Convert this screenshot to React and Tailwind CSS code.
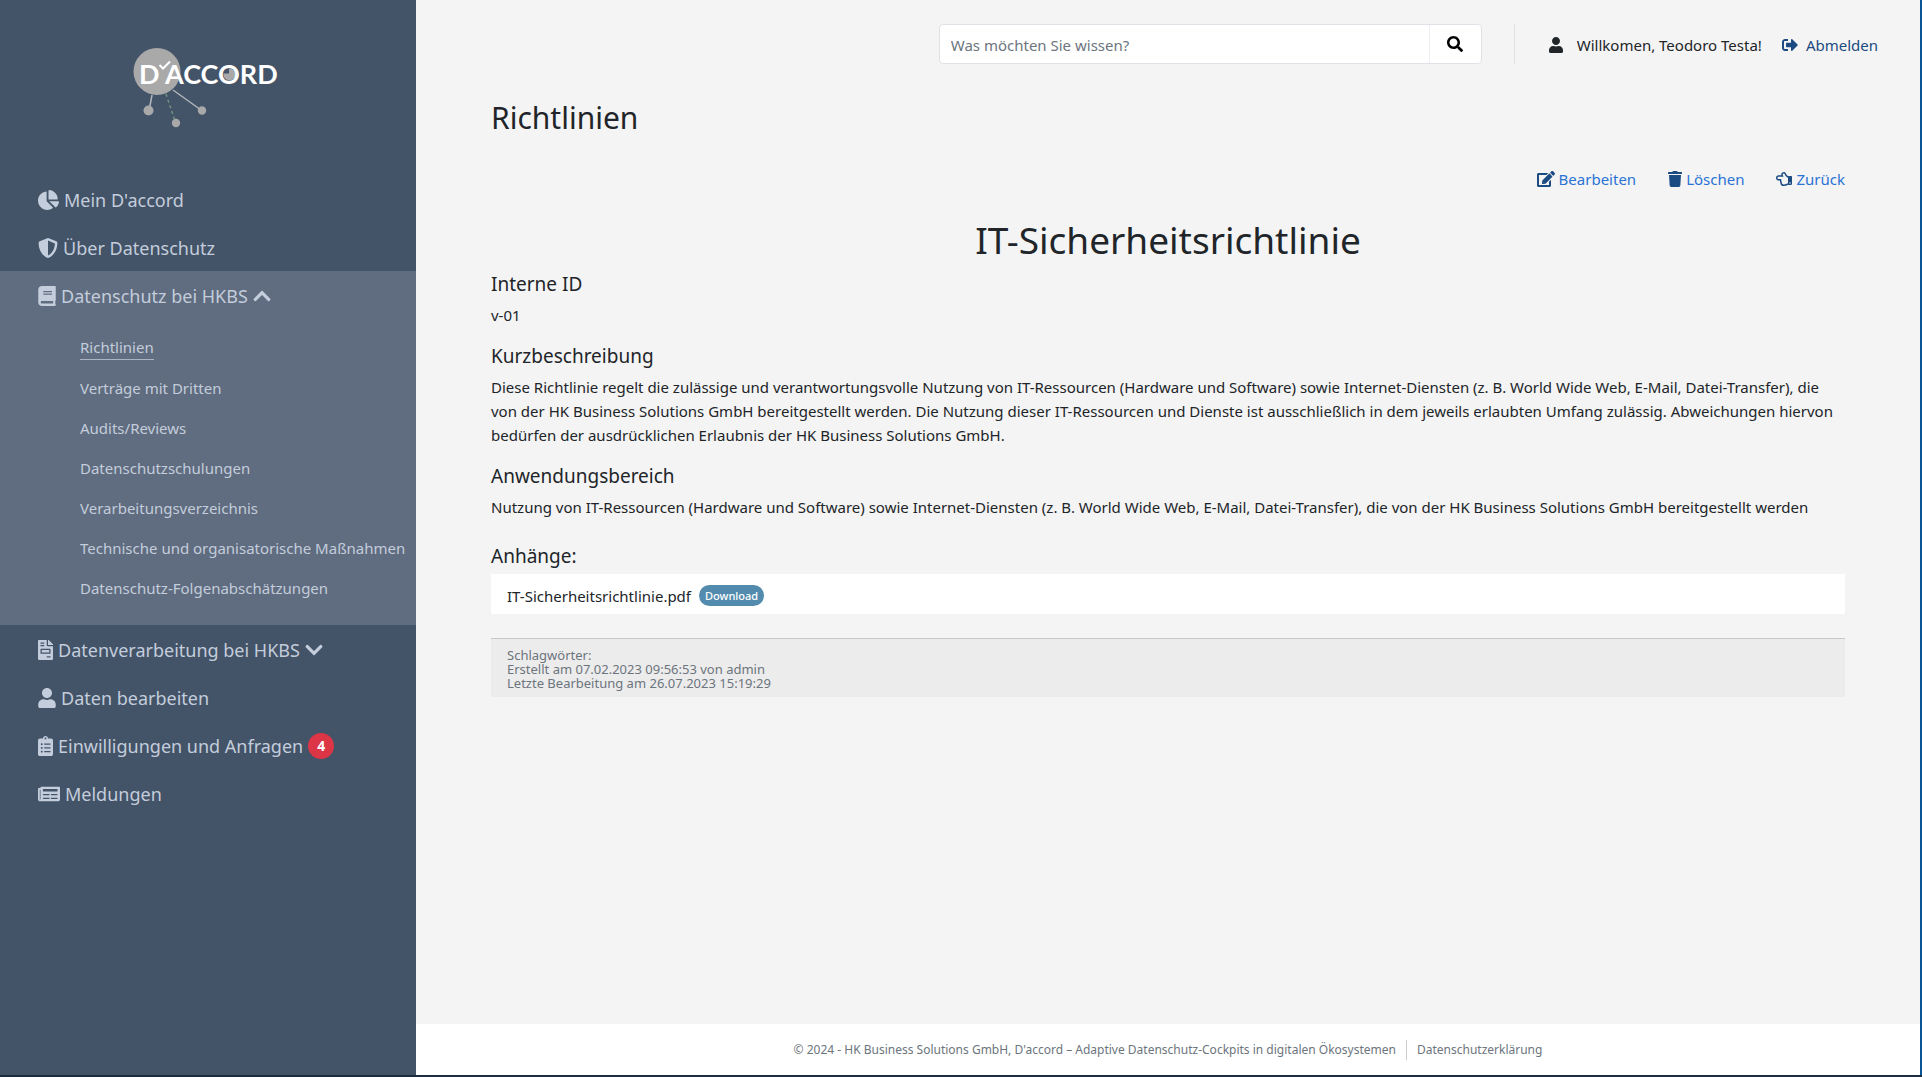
import React from "react";
import {
  FaChartPie,
  FaShieldAlt,
  FaBook,
  FaFileInvoice,
  FaUser,
  FaClipboardList,
  FaNewspaper,
  FaChevronUp,
  FaChevronDown,
  FaSearch,
  FaSignOutAlt,
  FaEdit,
  FaTrash,
  FaRegHandPointLeft,
} from "react-icons/fa";

const subItems = [
  "Richtlinien",
  "Verträge mit Dritten",
  "Audits/Reviews",
  "Datenschutzschulungen",
  "Verarbeitungsverzeichnis",
  "Technische und organisatorische Maßnahmen",
  "Datenschutz-Folgenabschätzungen",
];

function Logo() {
  return (
    <svg viewBox="0 0 150 84" className="h-[84px] w-[150px]" role="img" aria-label="D'accord">
      <g stroke="#b0b5ba" strokeWidth="1.5">
        <path d="M22 48 19 64" />
        <path d="M43 43 71 63" />
      </g>
      <path d="M36 47 45 74" stroke="#6f9480" strokeWidth="1.5" strokeDasharray="3 3" />
      <g fill="#a9a9a9">
        <circle cx="27" cy="24.500" r="23.500" />
        <circle cx="18.500" cy="63.500" r="5" />
        <circle cx="46" cy="76" r="4.200" />
        <circle cx="72" cy="63.500" r="4.200" />
        <circle cx="99.500" cy="27.500" r="6" />
      </g>
      <path d="M99 26.500V20H92V26.500Z" fill="#435368" />
      <g fill="#ffffff" fontFamily="Lato, sans-serif" fontWeight="700" fontSize="27">
        <text x="9" y="37">D</text>
        <text x="35" y="37">ACCORD</text>
      </g>
      <path d="M29.500 18 33 21.500 40 14.500" fill="none" stroke="#ffffff" strokeWidth="2" />
    </svg>
  );
}

function NavLink({ icon: Icon, iconWidth, children }) {
  return (
    <a href="#" className="flex h-12 items-center gap-[5px] pt-0.5 pl-[38px] text-[18px] whitespace-nowrap">
      <Icon className={`h-5 shrink-0 ${iconWidth}`} />
      {children}
    </a>
  );
}

function Sidebar() {
  return (
    <aside className="flex w-[416px] shrink-0 flex-col bg-[#435368] text-[#c3cddb]">
      <a href="#" className="mt-[47px] mb-11 ml-[130px] block">
        <Logo />
      </a>
      <nav>
        <NavLink icon={FaChartPie} iconWidth="w-[21px]">Mein D'accord</NavLink>
        <NavLink icon={FaShieldAlt} iconWidth="w-5">Über Datenschutz</NavLink>
        <div className="bg-[#606c7f] pb-[17px]">
          <NavLink icon={FaBook} iconWidth="w-[18px]">
            Datenschutz bei HKBS
            <FaChevronUp className="h-5 w-[18px]" />
          </NavLink>
          <ul className="mt-[9px] pl-20">
            {subItems.map((label, i) => (
              <li key={label} className="flex h-10 items-center text-[15px] whitespace-nowrap">
                <a href="#" className={i === 0 ? "border-b border-[#a9b4c4]" : ""}>
                  {label}
                </a>
              </li>
            ))}
          </ul>
        </div>
        <NavLink icon={FaFileInvoice} iconWidth="w-[15px]">
          Datenverarbeitung bei HKBS
          <FaChevronDown className="h-5 w-[18px]" />
        </NavLink>
        <NavLink icon={FaUser} iconWidth="w-[18px]">Daten bearbeiten</NavLink>
        <NavLink icon={FaClipboardList} iconWidth="w-[15px]">
          Einwilligungen und Anfragen
          <span className="flex h-[26px] w-[26px] items-center justify-center rounded-full bg-[#dc3545] text-sm font-bold text-white">
            4
          </span>
        </NavLink>
        <NavLink icon={FaNewspaper} iconWidth="w-[22px]">Meldungen</NavLink>
      </nav>
    </aside>
  );
}

function Header() {
  return (
    <header className="flex h-16 items-end justify-end pr-[42px] text-[15px]">
      <form className="flex h-10 w-[543px] rounded border border-[#dee2e6] bg-white" onSubmit={(e) => e.preventDefault()}>
        <input
          type="search"
          aria-label="Suche"
          placeholder="Was möchten Sie wissen?"
          className="min-w-0 flex-1 px-[11px] pt-0.5 outline-none placeholder:text-[#6c757d]"
        />
        <button type="submit" aria-label="Suchen" className="flex w-[52px] items-center justify-center border-l border-[#eceef0] text-black">
          <FaSearch className="h-4 w-4" />
        </button>
      </form>
      <div className="ml-8 flex h-10 items-center border-l border-[#dee2e6] pt-0.5 pl-[34px]">
        <FaUser className="h-4 w-[14px]" />
        <span className="ml-3.5">Willkomen, Teodoro Testa!</span>
        <a href="#" className="ml-5 flex items-center gap-2 text-[#1b4b82]">
          <FaSignOutAlt className="h-4 w-4" />
          Abmelden
        </a>
      </div>
    </header>
  );
}

function Action({ icon: Icon, iconWidth, children }) {
  return (
    <a href="#" className="flex items-center gap-1 text-[#2a72d4]">
      <Icon className={`h-4 text-[#1b4b82] ${iconWidth}`} />
      {children}
    </a>
  );
}

function Section({ title, children }) {
  return (
    <section className="mb-[17px]">
      <h3 className="mb-[7px] text-[19px] leading-6">{title}</h3>
      <p>{children}</p>
    </section>
  );
}

export default function App() {
  return (
    <div className="flex min-h-screen border-b-2 border-[#1b2d3e] bg-[#f4f4f4] font-['Noto_Sans',sans-serif] text-[#212529]">
      <Sidebar />
      <div className="flex min-w-0 flex-1 flex-col border-r-2 border-[#0a5596]">
        <Header />
        <main className="flex-1 px-[75px] text-[15px] leading-6">
          <h2 className="mt-[34px] text-[30px] leading-10">Richtlinien</h2>
          <div className="mt-[29px] flex justify-end gap-8">
            <Action icon={FaEdit} iconWidth="w-[18px]">Bearbeiten</Action>
            <Action icon={FaTrash} iconWidth="w-[14px]">Löschen</Action>
            <Action icon={FaRegHandPointLeft} iconWidth="w-4">Zurück</Action>
          </div>
          <h1 className="mt-[25px] mb-2 text-center text-[37px] leading-12">IT-Sicherheitsrichtlinie</h1>
          <Section title="Interne ID">v-01</Section>
          <Section title="Kurzbeschreibung">
            Diese Richtlinie regelt die zulässige und verantwortungsvolle Nutzung von IT-Ressourcen (Hardware und
            Software) sowie Internet-Diensten (z. B. World Wide Web, E-Mail, Datei-Transfer), die von der HK Business
            Solutions GmbH bereitgestellt werden. Die Nutzung dieser IT-Ressourcen und Dienste ist ausschließlich in dem
            jeweils erlaubten Umfang zulässig. Abweichungen hiervon bedürfen der ausdrücklichen Erlaubnis der HK
            Business Solutions GmbH.
          </Section>
          <Section title="Anwendungsbereich">
            Nutzung von IT-Ressourcen (Hardware und Software) sowie Internet-Diensten (z. B. World Wide Web, E-Mail,
            Datei-Transfer), die von der HK Business Solutions GmbH bereitgestellt werden
          </Section>
          <h3 className="mt-[25px] mb-[6px] text-[19px] leading-6">Anhänge:</h3>
          <div className="flex h-10 items-center gap-2 bg-white px-4 pt-[3px]">
            IT-Sicherheitsrichtlinie.pdf
            <a href="#" className="rounded-full bg-[#528bad] px-[6px] text-[11px] leading-[21px] font-medium text-white">
              Download
            </a>
          </div>
          <div className="mt-6 border-t border-[#c6c8ca] bg-[#ececec] px-4 pt-[9px] pb-[7px] text-[13px] leading-[14px] text-[#6c757d]">
            <p>Schlagwörter:</p>
            <p>Erstellt am 07.02.2023 09:56:53 von admin</p>
            <p>Letzte Bearbeitung am 26.07.2023 15:19:29</p>
          </div>
        </main>
        <footer className="flex h-[51px] items-center justify-center bg-white pt-px text-xs text-[#6c757d]">
          <span>© 2024 - HK Business Solutions GmbH, D'accord – Adaptive Datenschutz-Cockpits in digitalen Ökosystemen</span>
          <a href="#" className="ml-2.5 border-l border-[#c9cdd1] pl-2.5 leading-5">
            Datenschutzerklärung
          </a>
        </footer>
      </div>
    </div>
  );
}
